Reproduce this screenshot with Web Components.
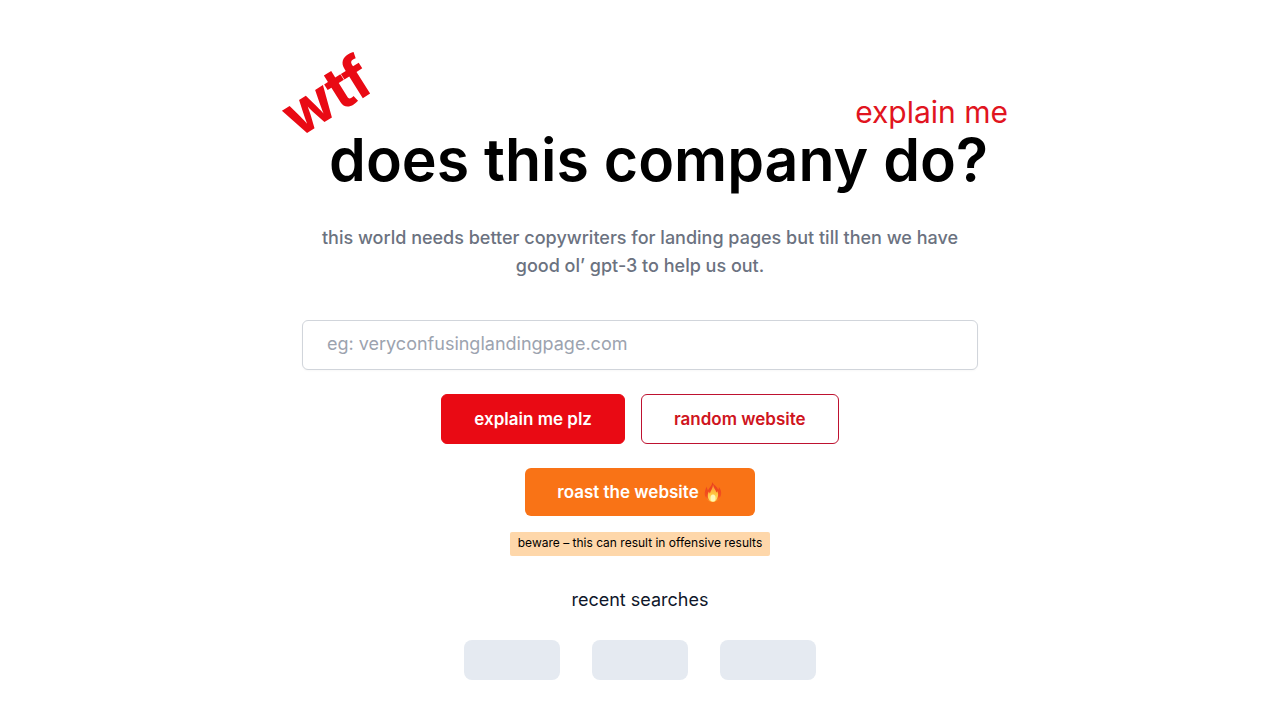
<!DOCTYPE html>
<html lang="en">
<head>
<meta charset="utf-8">
<meta name="viewport" content="width=device-width, initial-scale=1">
<title>wtf does this company do?</title>
<style>
  body { margin: 0; background: #fff; color: #0f172a; font-family: Inter, "Liberation Sans", sans-serif; }
</style>
</head>
<body>
<wtf-app></wtf-app>

<template id="app">
  <style>
    :host { display: block; padding: 56px 16px 40px; }
    main { display: flex; flex-direction: column; align-items: center; }
    .lead { margin: 32px 0 40px; max-width: 676px; text-align: center; font-size: 18px; font-weight: 500; line-height: 28px; color: #6b7280; }
    url-form { width: 100%; max-width: 676px; }
  </style>
  <main>
    <hero-title>
      <span slot="mark">wtf</span>
      <span slot="note">explain me</span>
      does this company do?
    </hero-title>
    <p class="lead">this world needs better copywriters for landing pages but till then we have good ol’ gpt-3 to help us out.</p>
    <url-form></url-form>
    <recent-searches>recent searches</recent-searches>
  </main>
</template>

<template id="hero">
  <style>
    :host { display: block; box-sizing: border-box; width: 100%; max-width: 736px; padding-left: 8px; }
    .top { display: flex; justify-content: space-between; align-items: flex-end; height: 72px; }
    .mark { color: #e90a14; font-size: 59px; font-weight: 700; line-height: 40px; transform: rotate(-32deg); margin-bottom: 12px; }
    .note { color: #e11420; font-size: 30px; line-height: 32px; }
    h1 { margin: 0; padding-right: 20px; text-align: right; color: #000; font-size: 59px; font-weight: 600; line-height: 64px; }
    @media (max-width: 720px) { h1 { font-size: 36px; line-height: 48px; padding: 0; text-align: center; } }
  </style>
  <div class="top">
    <div class="mark"><slot name="mark"></slot></div>
    <div class="note"><slot name="note"></slot></div>
  </div>
  <h1><slot></slot></h1>
</template>

<template id="form">
  <style>
    :host { display: block; }
    form { display: flex; flex-direction: column; align-items: center; gap: 24px; }
    input { box-sizing: border-box; width: 100%; height: 50px; padding: 0 24px 4px; border: 1px solid #d1d5db; border-radius: 6px; background: #fff; color: #111827; font: 400 18px/28px Inter, sans-serif; box-shadow: 0 1px 2px rgb(0 0 0 / 3%); }
    input::placeholder { color: #9ca3af; opacity: 1; }
    .row { display: flex; flex-wrap: wrap; justify-content: center; gap: 16px; }
    .roast { display: flex; flex-direction: column; align-items: center; gap: 16px; }
    small { padding: 0 8px 2px; border-radius: 2px; background: #fed7aa; color: #000; font-size: 12px; line-height: 22px; }
  </style>
  <form>
    <input type="url" name="url" aria-label="Website address" placeholder="eg: veryconfusinglandingpage.com">
    <div class="row">
      <action-button>explain me plz</action-button>
      <action-button kind="outline">random website</action-button>
    </div>
    <div class="roast">
      <action-button kind="roast">roast the website <fire-icon></fire-icon></action-button>
      <small>beware – this can result in offensive results</small>
    </div>
  </form>
</template>

<template id="button">
  <style>
    :host { display: block; }
    button { display: flex; align-items: center; gap: 4px; box-sizing: border-box; height: 50px; padding: 0 32px; border: 1px solid #e90a14; border-radius: 6px; background: #e90a14; color: #fff; font: 600 17px/24px Inter, sans-serif; cursor: pointer; }
    :host([kind="outline"]) button { background: #fff; border-color: #be1230; color: #cf1420; }
    :host([kind="roast"]) button { height: 48px; border: 0; background: #f97316; }
  </style>
  <button type="button"><slot></slot></button>
</template>

<template id="fire">
  <style>:host { display: block; } svg { display: block; }</style>
  <svg width="20" height="20" viewBox="0 0 20 20" aria-hidden="true">
    <defs>
      <linearGradient id="o" x1="0" y1="0" x2="0" y2="1"><stop offset="0" stop-color="#e8401f"/><stop offset=".7" stop-color="#f4511e"/><stop offset="1" stop-color="#ff9d2a"/></linearGradient>
      <linearGradient id="i" x1="0" y1="0" x2="0" y2="1"><stop offset="0" stop-color="#ff8f2e"/><stop offset=".5" stop-color="#ffc23e"/><stop offset="1" stop-color="#ffe873"/></linearGradient>
    </defs>
    <path fill="url(#o)" d="M9 0c1.500 3 5.300 4.500 6.200 7.800.6-.7.8-1.700.7-2.800 1.700 2 2.700 4.800 2.200 7.600C17.400 17 14 20 10 20s-7.600-2.800-8.200-7C1.400 10 2.500 7.400 3.600 4.600c0 1.300.7 2.300 1.400 4C6 5.300 9.600 3.800 9 0z"/>
    <path fill="url(#i)" d="M10 2.500c.3 3.500 2.800 5 3.300 8 .5-.4.7-1 .8-1.600 1 1.600 1.300 3.500.8 5.300-.7 3.400-2.500 5.600-5 5.600s-4.600-2-5-5c-.3-2 .2-3.800 1.100-5.200.1.800.4 1.500.9 2 .6-3 3-5 3.100-9.100z"/>
    <ellipse cx="10" cy="16" rx="2.500" ry="3.500" fill="#fff6b8"/>
  </svg>
</template>

<template id="recent">
  <style>
    :host { display: block; margin-top: 30px; text-align: center; }
    h2 { margin: 0 0 26px; font-size: 18px; font-weight: 400; line-height: 28px; }
    .list { display: flex; justify-content: center; gap: 32px; }
    .item { width: 96px; height: 40px; border-radius: 8px; background: #e5eaf1; }
  </style>
  <h2><slot></slot></h2>
  <div class="list" aria-busy="true"><div class="item"></div><div class="item"></div><div class="item"></div></div>
</template>

<script>
  const define = (name, id) => customElements.define(name, class extends HTMLElement {
    constructor() {
      super();
      this.attachShadow({ mode: 'open' }).append(document.getElementById(id).content.cloneNode(true));
    }
  });
  define('fire-icon', 'fire');
  define('action-button', 'button');
  define('hero-title', 'hero');
  define('url-form', 'form');
  define('recent-searches', 'recent');
  define('wtf-app', 'app');
</script>
</body>
</html>
